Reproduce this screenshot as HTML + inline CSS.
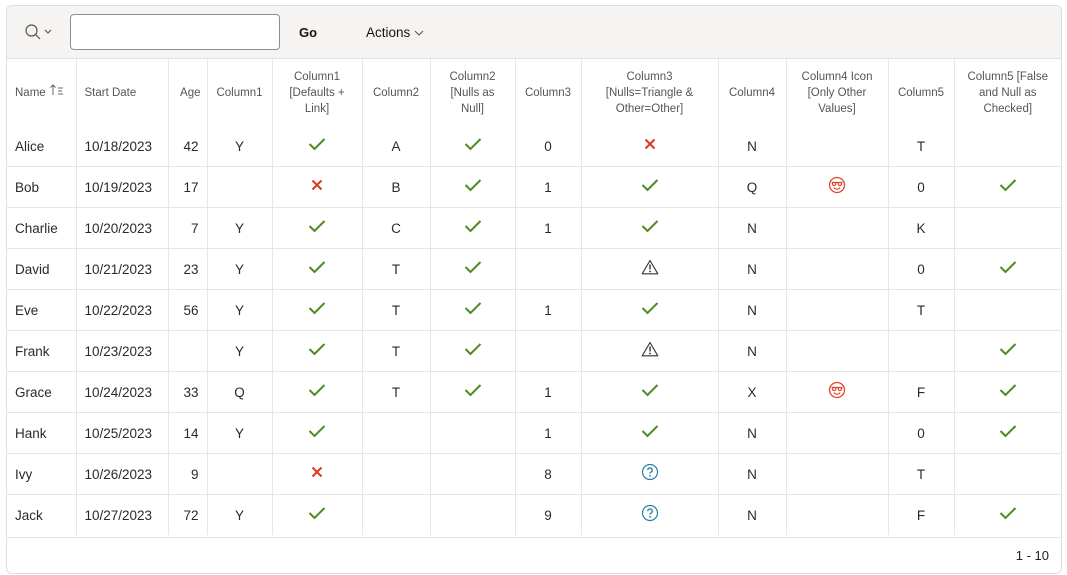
<!DOCTYPE html>
<html><head><meta charset="utf-8"><style>
body{margin:0;background:#fff;font-family:"Liberation Sans",sans-serif;}
.wrap{position:absolute;left:6px;top:5px;width:1054px;height:567px;border:1px solid #dfdedc;border-radius:6px;overflow:hidden;background:#fff}
.tb{height:52px;background:#f5f4f2;border-bottom:1px solid #e2e1df;position:relative}
.inp{position:absolute;left:63px;top:8px;width:208px;height:34px;border:1px solid #8f8d8a;border-radius:4px;background:#fff}
.go{position:absolute;left:292px;top:19px;font-size:13px;font-weight:bold;color:#161513}
.act{position:absolute;left:359px;top:19px;font-size:13.5px;color:#161513}
table{position:absolute;left:0;top:53px;border-collapse:collapse;table-layout:fixed;width:1054px}
th{height:67px;font-weight:normal;font-size:11.5px;color:#555;line-height:16px;border-right:1px solid #e6e6e6;padding:0 2px;text-align:center;white-space:nowrap}
td{height:40px;font-size:13.5px;color:#2a2a2a;border-right:1px solid #e6e6e6;border-top:1px solid #e6e6e6;text-align:center;padding:0 8px}
tr.f td{border-top:none}
th:last-child,td:last-child{border-right:none}
.l{text-align:left}.r{text-align:right}
td svg{vertical-align:middle;margin-top:-5px}
.foot{position:absolute;left:0;top:531px;width:1054px;height:36px;border-top:1px solid #e6e6e6;}
.foot span{position:absolute;right:12px;top:10px;font-size:13px;color:#222}
</style></head><body>
<svg width="0" height="0" style="position:absolute">
<defs>
<symbol id="c" viewBox="0 0 18 14"><path d="M1.5 7l5 5L16.5 2" fill="none" stroke="#4f8a23" stroke-width="2"/></symbol>
<symbol id="x" viewBox="0 0 12 12"><path d="M1.5 1.5l9 9M10.5 1.5l-9 9" stroke="#d63b25" stroke-width="2"/></symbol>
<symbol id="t" viewBox="0 0 18 16"><path d="M9 1.5L16.8 14.8H1.2Z" fill="none" stroke="#333" stroke-width="1.1" stroke-linejoin="round"/><path d="M9 5.5v5" stroke="#333" stroke-width="1.4"/><circle cx="9" cy="12.5" r=".9" fill="#333"/></symbol>
<symbol id="q" viewBox="0 0 18 18"><circle cx="9" cy="9" r="7.5" fill="none" stroke="#2b7ea6" stroke-width="1.2"/><path d="M6.8 7.2a2.2 2.2 0 1 1 3 2c-.6.3-.8.7-.8 1.4" fill="none" stroke="#2b7ea6" stroke-width="1.3"/><circle cx="9" cy="12.8" r=".9" fill="#2b7ea6"/></symbol>
<symbol id="s" viewBox="0 0 18 18"><circle cx="9" cy="9" r="7.5" fill="none" stroke="#e0442b" stroke-width="1.3"/><path d="M3.5 6.5h11M4.5 6.5v1.5a1.6 1.6 0 0 0 3.2 0V6.5M10.3 6.5v1.5a1.6 1.6 0 0 0 3.2 0V6.5M6 11.5a3.5 3.5 0 0 0 6 0" fill="none" stroke="#e0442b" stroke-width="1.2"/></symbol>
</defs></svg>
<div class="wrap">
<div class="tb">
<svg style="position:absolute;left:17px;top:17px" width="40" height="18" viewBox="0 0 40 18"><circle cx="7.5" cy="7.5" r="5.5" fill="none" stroke="#555" stroke-width="1.2"/><path d="M11.5 11.5L16 16" stroke="#555" stroke-width="1.2"/><path d="M21 7l3 3 3-3" fill="none" stroke="#555" stroke-width="1.1"/></svg>
<div class="inp"></div>
<div class="go">Go</div>
<div class="act">Actions <svg width="10" height="8" viewBox="0 0 10 8"><path d="M1 2l4 4 4-4" fill="none" stroke="#555" stroke-width="1.1"/></svg></div>
</div>
<table>
<colgroup><col style="width:69px"><col style="width:92px"><col style="width:39px"><col style="width:65px"><col style="width:90px"><col style="width:68px"><col style="width:85px"><col style="width:66px"><col style="width:137px"><col style="width:68px"><col style="width:102px"><col style="width:66px"><col style="width:107px"></colgroup>
<tr><th class="l" style="padding-left:8px">Name <svg width="16" height="12" viewBox="0 0 16 12"><path d="M4 11V1M1.5 3.5L4 1l2.5 2.5" fill="none" stroke="#666"/><path d="M9 4h5M9 7h4M9 10h5" stroke="#666"/></svg></th><th class="l" style="padding-left:8px">Start Date</th><th class="r" style="padding-right:6px">Age</th><th>Column1</th><th>Column1<br>[Defaults +<br>Link]</th><th>Column2</th><th>Column2<br>[Nulls as<br>Null]</th><th>Column3</th><th>Column3<br>[Nulls=Triangle &amp;<br>Other=Other]</th><th>Column4</th><th>Column4 Icon<br>[Only Other<br>Values]</th><th>Column5</th><th>Column5 [False<br>and Null as<br>Checked]</th></tr>
<tr class="f"><td class="l">Alice</td><td class="l">10/18/2023</td><td class="r">42</td><td>Y</td><td><svg width="18" height="14"><use href="#c"/></svg></td><td>A</td><td><svg width="18" height="14"><use href="#c"/></svg></td><td>0</td><td><svg width="12" height="12"><use href="#x"/></svg></td><td>N</td><td></td><td>T</td><td></td></tr>
<tr><td class="l">Bob</td><td class="l">10/19/2023</td><td class="r">17</td><td></td><td><svg width="12" height="12"><use href="#x"/></svg></td><td>B</td><td><svg width="18" height="14"><use href="#c"/></svg></td><td>1</td><td><svg width="18" height="14"><use href="#c"/></svg></td><td>Q</td><td><svg width="18" height="18"><use href="#s"/></svg></td><td>0</td><td><svg width="18" height="14"><use href="#c"/></svg></td></tr>
<tr><td class="l">Charlie</td><td class="l">10/20/2023</td><td class="r">7</td><td>Y</td><td><svg width="18" height="14"><use href="#c"/></svg></td><td>C</td><td><svg width="18" height="14"><use href="#c"/></svg></td><td>1</td><td><svg width="18" height="14"><use href="#c"/></svg></td><td>N</td><td></td><td>K</td><td></td></tr>
<tr><td class="l">David</td><td class="l">10/21/2023</td><td class="r">23</td><td>Y</td><td><svg width="18" height="14"><use href="#c"/></svg></td><td>T</td><td><svg width="18" height="14"><use href="#c"/></svg></td><td></td><td><svg width="18" height="16"><use href="#t"/></svg></td><td>N</td><td></td><td>0</td><td><svg width="18" height="14"><use href="#c"/></svg></td></tr>
<tr><td class="l">Eve</td><td class="l">10/22/2023</td><td class="r">56</td><td>Y</td><td><svg width="18" height="14"><use href="#c"/></svg></td><td>T</td><td><svg width="18" height="14"><use href="#c"/></svg></td><td>1</td><td><svg width="18" height="14"><use href="#c"/></svg></td><td>N</td><td></td><td>T</td><td></td></tr>
<tr><td class="l">Frank</td><td class="l">10/23/2023</td><td class="r"></td><td>Y</td><td><svg width="18" height="14"><use href="#c"/></svg></td><td>T</td><td><svg width="18" height="14"><use href="#c"/></svg></td><td></td><td><svg width="18" height="16"><use href="#t"/></svg></td><td>N</td><td></td><td></td><td><svg width="18" height="14"><use href="#c"/></svg></td></tr>
<tr><td class="l">Grace</td><td class="l">10/24/2023</td><td class="r">33</td><td>Q</td><td><svg width="18" height="14"><use href="#c"/></svg></td><td>T</td><td><svg width="18" height="14"><use href="#c"/></svg></td><td>1</td><td><svg width="18" height="14"><use href="#c"/></svg></td><td>X</td><td><svg width="18" height="18"><use href="#s"/></svg></td><td>F</td><td><svg width="18" height="14"><use href="#c"/></svg></td></tr>
<tr><td class="l">Hank</td><td class="l">10/25/2023</td><td class="r">14</td><td>Y</td><td><svg width="18" height="14"><use href="#c"/></svg></td><td></td><td></td><td>1</td><td><svg width="18" height="14"><use href="#c"/></svg></td><td>N</td><td></td><td>0</td><td><svg width="18" height="14"><use href="#c"/></svg></td></tr>
<tr><td class="l">Ivy</td><td class="l">10/26/2023</td><td class="r">9</td><td></td><td><svg width="12" height="12"><use href="#x"/></svg></td><td></td><td></td><td>8</td><td><svg width="18" height="18"><use href="#q"/></svg></td><td>N</td><td></td><td>T</td><td></td></tr>
<tr><td class="l">Jack</td><td class="l">10/27/2023</td><td class="r">72</td><td>Y</td><td><svg width="18" height="14"><use href="#c"/></svg></td><td></td><td></td><td>9</td><td><svg width="18" height="18"><use href="#q"/></svg></td><td>N</td><td></td><td>F</td><td><svg width="18" height="14"><use href="#c"/></svg></td></tr>
</table>
<div class="foot"><span>1 - 10</span></div>
</div>
</body></html>
